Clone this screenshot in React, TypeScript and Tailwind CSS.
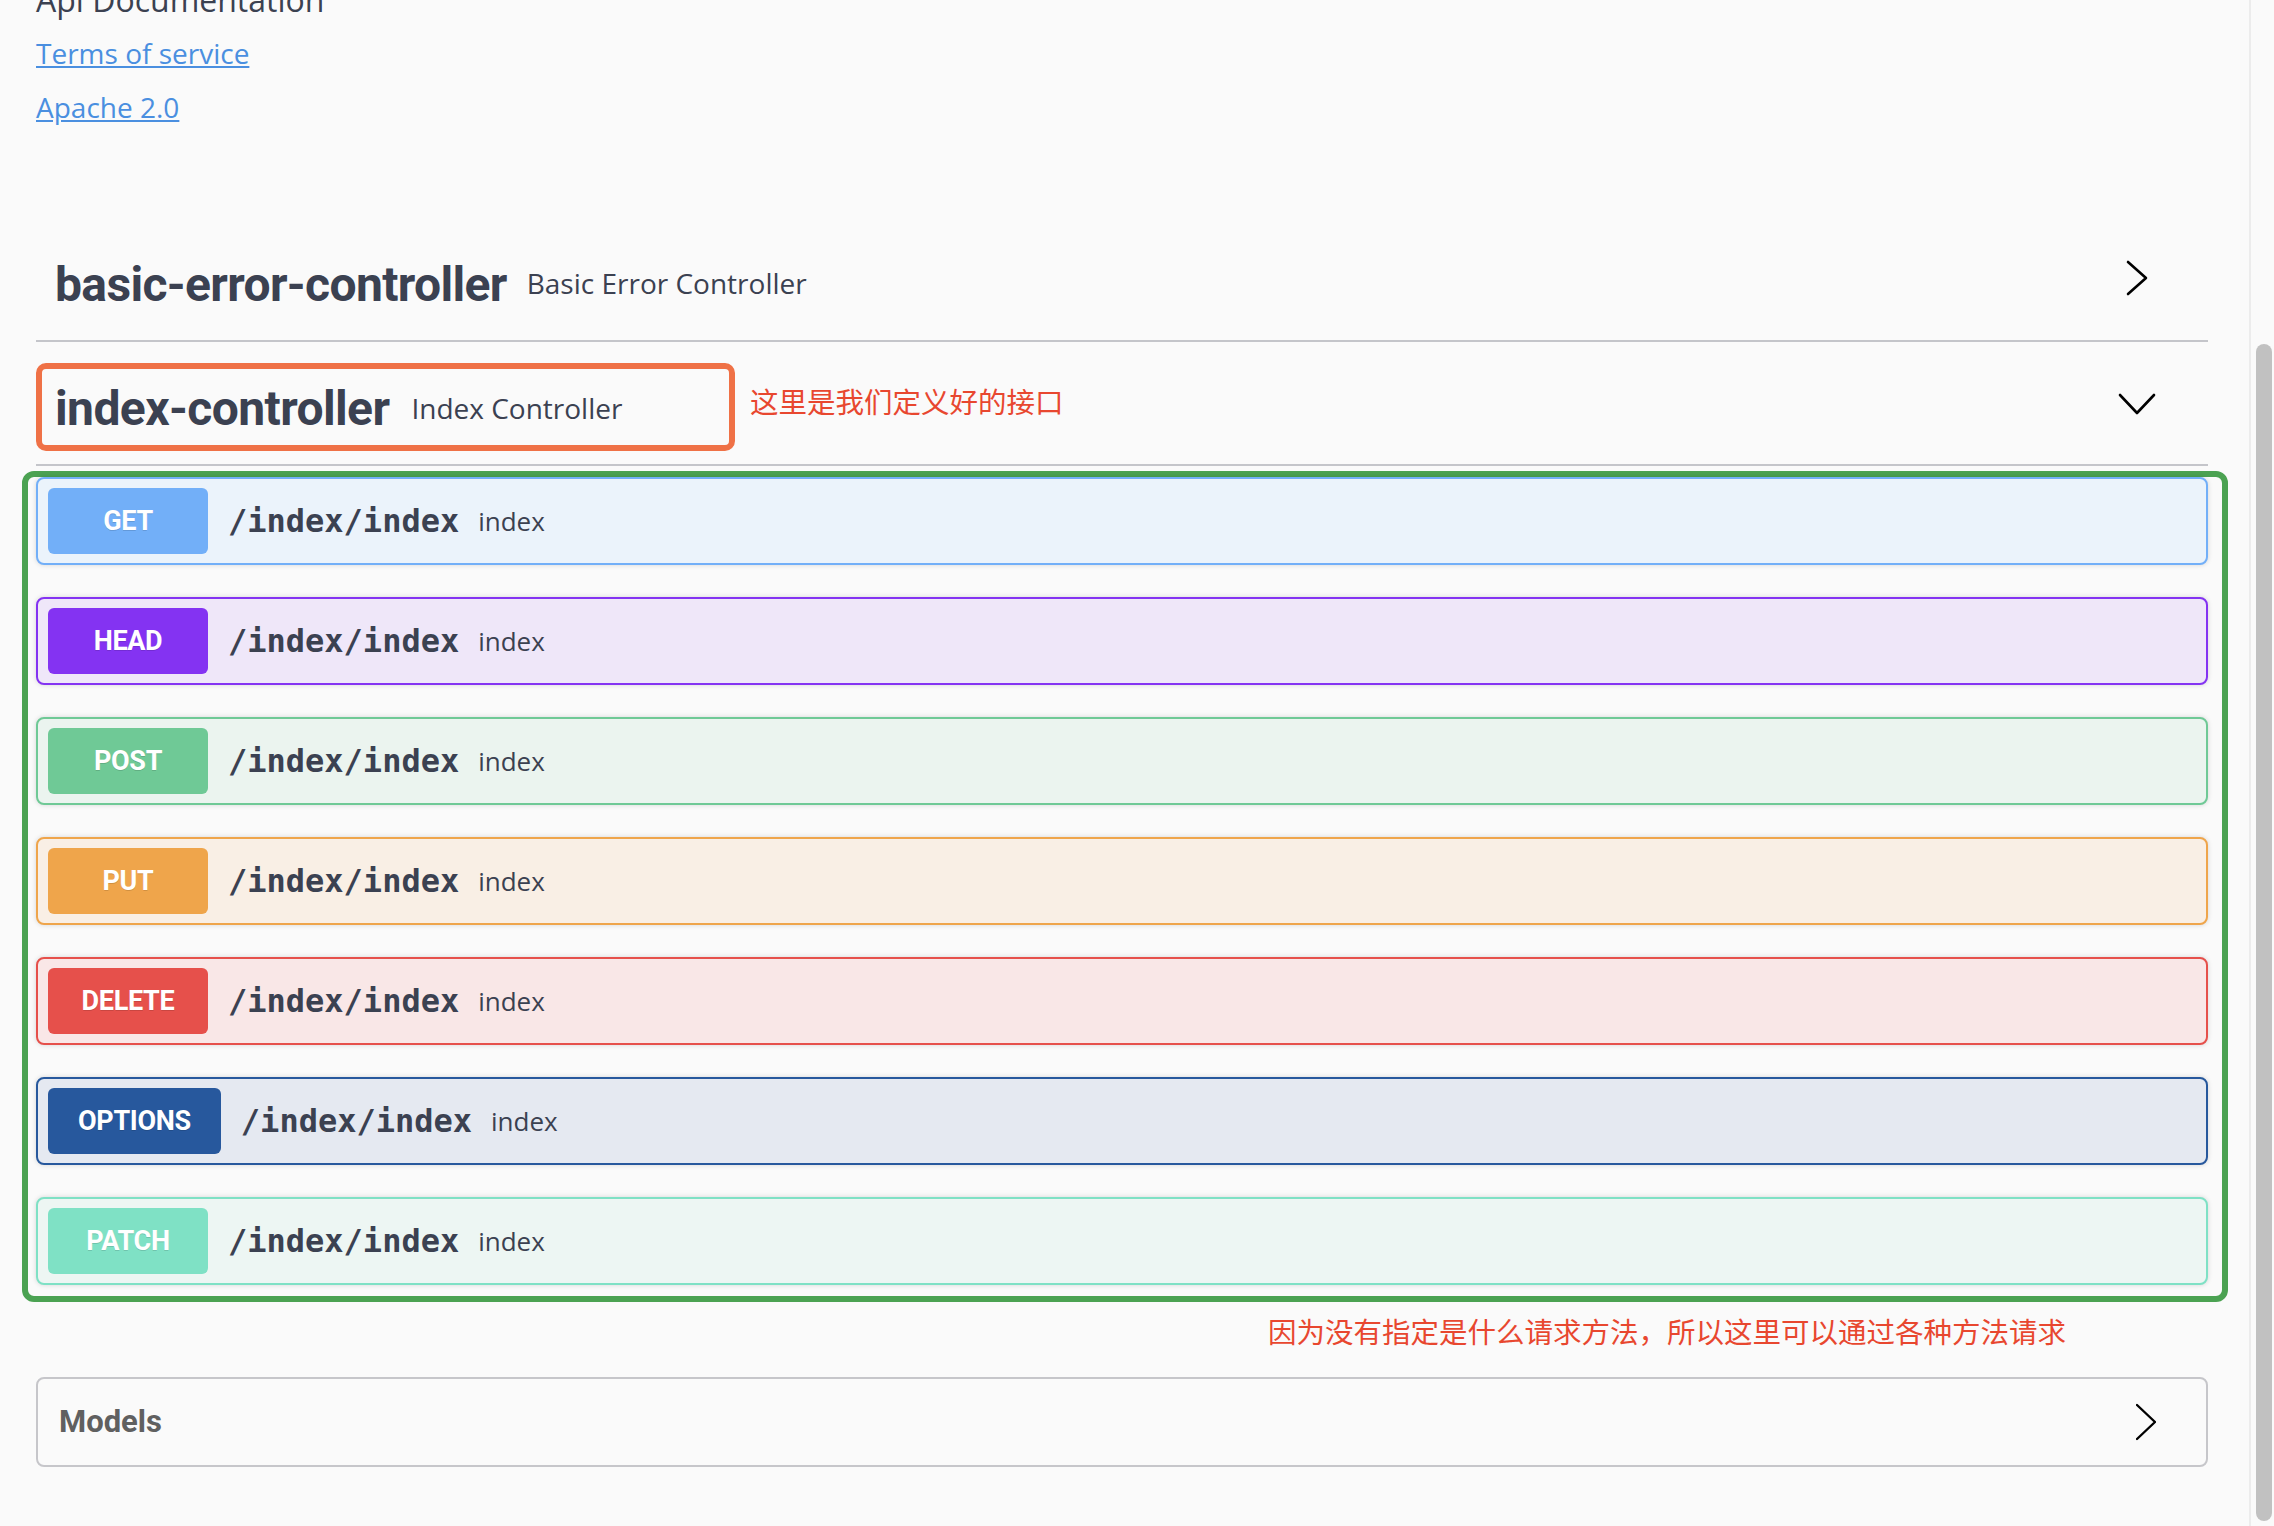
import React from "react";

type Method = {
  name: string;
  badge: string;
  border: string;
  bg: string;
};

const methods: Method[] = [
  { name: "GET", badge: "bg-[#72aff8]", border: "border-[#72aff8]", bg: "bg-[#ebf3fb]" },
  { name: "HEAD", badge: "bg-[#8433f2]", border: "border-[#8433f2]", bg: "bg-[#efe7f9]" },
  { name: "POST", badge: "bg-[#6fc996]", border: "border-[#6fc996]", bg: "bg-[#ebf4ef]" },
  { name: "PUT", badge: "bg-[#efa54b]", border: "border-[#efa54b]", bg: "bg-[#f9efe5]" },
  { name: "DELETE", badge: "bg-[#e6504b]", border: "border-[#e6504b]", bg: "bg-[#f9e7e7]" },
  { name: "OPTIONS", badge: "bg-[#27589d]", border: "border-[#27589d]", bg: "bg-[#e5e9f1]" },
  { name: "PATCH", badge: "bg-[#7fe1c5]", border: "border-[#7fe1c5]", bg: "bg-[#edf6f3]" },
];

function ChevronRight() {
  return (
    <svg width="40" height="40" viewBox="0 0 40 40" fill="none" className="mb-[10px]">
      <polyline points="11,4 29,20 11,36" stroke="#000" strokeWidth="2.6" strokeLinecap="round" strokeLinejoin="round" />
    </svg>
  );
}

function ChevronDown() {
  return (
    <svg width="40" height="40" viewBox="0 0 40 40" fill="none" className="mb-[7px]">
      <polyline points="3,11 20,29 37,11" stroke="#000" strokeWidth="2.6" strokeLinecap="round" strokeLinejoin="round" />
    </svg>
  );
}

function OpBlock({ m }: { m: Method }) {
  return (
    <div
      className={`flex h-[88px] items-center rounded-[8px] border-2 pl-[10px] shadow-[0_0_5px_rgba(0,0,0,0.15)] ${m.border} ${m.bg}`}
    >
      <div
        className={`flex h-[66px] min-w-[160px] items-center justify-center rounded-[6px] px-[30px] font-['Roboto',sans-serif] text-[27px] font-bold leading-none tracking-[-0.3px] text-white [text-shadow:0_1px_0_rgba(0,0,0,0.15)] ${m.badge}`}
      >
        {m.name}
      </div>
      <span className="ml-[20px] font-['DejaVu_Sans_Mono',monospace] text-[32px] font-bold leading-[40px] text-[#3b4151]">
        /index/index
      </span>
      <span className="ml-[19px] font-['Open_Sans',sans-serif] text-[26px] leading-[36px] text-[#3b4151]">
        index
      </span>
    </div>
  );
}

export default function App() {
  return (
    <div className="flex h-[1526px] w-[2274px] overflow-hidden bg-[#fafafa] text-[#3b4151]">
      <main className="flex w-[2249px] flex-col pl-[36px]">
        <div className="flex flex-col font-['Open_Sans',sans-serif]">
          <p className="mt-[-20px] text-[32px] leading-[40px] text-[#3b4151]">Api Documentation</p>
          <a className="mt-[15px] block w-fit text-[28px] leading-[36px] text-[#4a8fe0] underline">
            Terms of service
          </a>
          <a className="mt-[18px] block w-fit text-[28px] leading-[36px] text-[#4a8fe0] underline">
            Apache 2.0
          </a>
        </div>

        <div className="mt-[101px] flex w-[2172px] flex-col">
          {/* basic-error-controller */}
          <div className="flex h-[116px] items-center justify-between border-b-2 border-[#c4c5ca] pr-[51px]">
            <div className="ml-[19px] flex items-center">
              <h4 className="mt-[4px] font-['Roboto',sans-serif] text-[48px] font-bold leading-[56px] tracking-[-0.65px] text-[#3b4151]">
                basic-error-controller
              </h4>
              <small className="ml-[20px] font-['Open_Sans',sans-serif] text-[28px] leading-[36px] text-[#3b4151]">
                Basic Error Controller
              </small>
            </div>
            <ChevronRight />
          </div>

          {/* index-controller */}
          <div className="mt-[8px] flex h-[116px] items-center justify-between border-b-2 border-[#c4c5ca] pr-[51px]">
            <div className="flex items-center">
              <div className="flex h-[88px] w-[699px] items-center rounded-[10px] border-[6px] border-[#ef7146] pl-[13px]">
                <h4 className="mt-[4px] font-['Roboto',sans-serif] text-[48px] font-bold leading-[56px] tracking-[-0.6px] text-[#3b4151]">
                  index-controller
                </h4>
                <small className="ml-[22px] mt-[2px] font-['Open_Sans',sans-serif] text-[28px] leading-[36px] text-[#3b4151]">
                  Index Controller
                </small>
              </div>
              <span className="mb-[13px] ml-[15px] whitespace-nowrap font-['Noto_Sans_CJK_SC',sans-serif] text-[28.5px] leading-[40px] text-[#e8472f]">
                这里是我们定义好的接口
              </span>
            </div>
            <ChevronDown />
          </div>

          {/* operations, circled in green */}
          <div className="-ml-[14px] mt-[5px] flex w-[2206px] flex-col gap-[32px] rounded-[12px] border-[6px] border-[#4ba252] pb-[11px] pl-[8px] pr-[14px]">
            {methods.map((m) => (
              <OpBlock key={m.name} m={m} />
            ))}
          </div>

          <p className="ml-[1232px] mt-[9px] whitespace-nowrap font-['Noto_Sans_CJK_SC',sans-serif] text-[28.5px] leading-[40px] text-[#e8472f]">
            因为没有指定是什么请求方法，所以这里可以通过各种方法请求
          </p>

          {/* Models */}
          <div className="mt-[26px] flex h-[90px] items-center justify-between rounded-[8px] border-2 border-[#c6c6ca] pl-[21px] pr-[50px]">
            <h4 className="font-['Roboto',sans-serif] text-[31px] font-bold leading-[40px] text-[#606060]">Models</h4>
            <svg width="20" height="40" viewBox="0 0 20 40" fill="none">
              <polyline points="1,3 19,20 1,37" stroke="#000" strokeWidth="2.4" strokeLinecap="round" strokeLinejoin="round" />
            </svg>
          </div>
        </div>
      </main>

      <div className="flex w-[25px] flex-col border-l-2 border-[#ececec] bg-[#fafafa] pb-[5px] pt-[344px]">
        <div className="ml-[5px] w-[16px] flex-1 rounded-full bg-[#c1c1c1]" />
      </div>
    </div>
  );
}
